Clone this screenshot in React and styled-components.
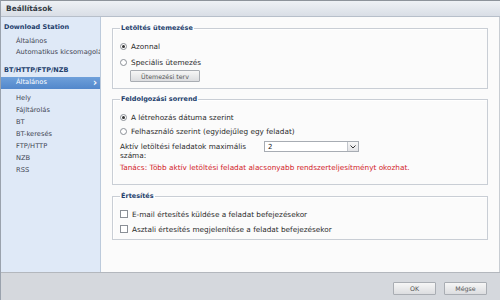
import React from "react"
import styled, { createGlobalStyle } from "styled-components"

const Global = createGlobalStyle`
  html, body { margin: 0; padding: 0; background: #fff; }
  body { font-family: "DejaVu Sans", Verdana, sans-serif; }
`;

const Window = styled.div`
  width: 500px;
  height: 300px;
  display: flex;
  flex-direction: column;
  overflow: hidden;
  box-sizing: border-box;
  border-top: 1px solid #8d939b;
  border-left: 1px solid #9aa2ad;
`;

const TitleBar = styled.div`
  height: 15px;
  flex: none;
  display: flex;
  align-items: center;
  padding-left: 5px;
  background: linear-gradient(#eef1f5, #d9dee6);
  border-bottom: 1px solid #b7bfca;
  font-size: 7.4px;
  font-weight: bold;
  color: #333a44;
`;

const Body = styled.div`
  flex: 1;
  display: flex;
  min-height: 0;
`;

const Sidebar = styled.div`
  width: 100px;
  flex: none;
  background: #dfe9f7;
  border-right: 1px solid #bccadb;
  padding-top: 4px;
  box-sizing: border-box;
`;

const GroupTitle = styled.div`
  height: 13px;
  line-height: 13px;
  padding-left: 3px;
  font-size: 6.5px;
  font-weight: bold;
  color: #23406c;
  margin-top: ${p => p.$gap || 0}px;
  margin-bottom: ${p => p.$mb || 0}px;
`;

const NavItem = styled.div`
  height: ${p => p.$h || 12}px;
  line-height: ${p => p.$h || 12}px;
  padding-left: 15px;
  padding-right: 3px;
  font-size: 6.7px;
  color: ${p => (p.$active ? "#fff" : "#3f4754")};
  background: ${p => (p.$active ? "linear-gradient(#6fa0da, #5287cb)" : "transparent")};
  white-space: nowrap;
  overflow: hidden;
  display: flex;
  align-items: center;
  justify-content: space-between;
  margin-bottom: ${p => (p.$active ? 3 : 0)}px;
`;

const Chevron = styled.span`
  font-weight: bold;
  font-size: 10px;
  line-height: 10px;
`;

const Content = styled.div`
  flex: 1;
  background: #fbfbfb;
  padding: 7px 11px 0 11px;
  border-right: 1px solid #c8cdd3;
  box-sizing: border-box;
`;

const Group = styled.fieldset`
  margin: 0 0 ${p => p.$mb}px 0;
  padding: 0 7px;
  border: 1px solid #c9ced5;
  box-shadow: inset 1px 1px 0 #fff;
  height: ${p => p.$h}px;
  box-sizing: border-box;
`;

const Legend = styled.legend`
  padding: 0 1px;
  margin-left: 0;
  font-size: 6.5px;
  font-weight: bold;
  color: #23406c;
`;

const Row = styled.div`
  display: flex;
  align-items: center;
  height: ${p => p.$h || 15}px;
  margin-top: ${p => p.$mt || 0}px;
  font-size: 7.3px;
  color: #2b2b2b;
  padding-left: ${p => p.$indent || 0}px;
  white-space: nowrap;
`;

const Radio = styled.span`
  width: 5px;
  height: 5px;
  flex: none;
  border-radius: 50%;
  border: 1px solid #8a8f96;
  background: #fff;
  margin-right: 4px;
  display: flex;
  align-items: center;
  justify-content: center;
  &::after {
    content: "";
    width: 3px;
    height: 3px;
    border-radius: 50%;
    background: ${p => (p.$on ? "#333" : "transparent")};
  }
`;

const Check = styled.span`
  width: 6px;
  height: 6px;
  flex: none;
  border: 1px solid #8a8f96;
  background: #fff;
  margin-right: 4px;
`;

const Button = styled.div`
  width: ${p => p.$w}px;
  height: ${p => p.$hh || 12}px;
  box-sizing: border-box;
  border: 1px solid #a9adb3;
  border-radius: 1px;
  background: linear-gradient(#f6f6f6, #dcdde0);
  display: flex;
  align-items: center;
  justify-content: center;
  font-size: 6.3px;
  color: #555;
`;

const FieldRow = styled.div`
  display: flex;
  align-items: flex-start;
  margin-top: 3px;
  height: 19px;
`;

const FieldLabel = styled.div`
  width: 144px;
  padding-top: 1px;
  font-size: 7.3px;
  line-height: 9px;
  color: #2b2b2b;
`;

const Select = styled.div`
  width: 95px;
  height: 11px;
  box-sizing: border-box;
  border: 1px solid #a7acb3;
  background: #fff;
  display: flex;
  align-items: center;
  font-size: 7px;
  color: #222;
  padding-left: 3px;
`;

const SelectText = styled.span`
  flex: 1;
`;

const Arrow = styled.span`
  width: 10px;
  height: 9px;
  border-left: 1px solid #c2c6cc;
  background: linear-gradient(#f7f7f7, #e2e3e6);
  display: flex;
  align-items: center;
  justify-content: center;
`;

const Hint = styled.div`
  margin-top: 2px;
  font-size: 7.3px;
  color: #d2232a;
  height: 12px;
  line-height: 12px;
  white-space: nowrap;
`;

const Footer = styled.div`
  height: 28px;
  flex: none;
  background: #d5d8dd;
  border-top: 1px solid #b3b7bd;
  display: flex;
  justify-content: flex-end;
  align-items: center;
  gap: 8px;
  padding: 4px 13px 0 0;
  box-sizing: border-box;
`;

const App = () => {
  const items = ["Hely", "Fájltárolás", "BT", "BT-keresés", "FTP/HTTP", "NZB", "RSS"];
  return (
    <Window>
      <Global />
      <TitleBar>Beállítások</TitleBar>
      <Body>
        <Sidebar>
          <GroupTitle $mb={2}>Download Station</GroupTitle>
          <NavItem $h={11}>Általános</NavItem>
          <NavItem $h={11}>Automatikus kicsomagolás</NavItem>
          <GroupTitle $gap={6}>BT/HTTP/FTP/NZB</GroupTitle>
          <NavItem $active $h={11.5}>
            Általános <Chevron>›</Chevron>
          </NavItem>
          {items.map(i => (
            <NavItem key={i}>{i}</NavItem>
          ))}
        </Sidebar>
        <Content>
          <Group $h={65} $mb={6}>
            <Legend>Letöltés ütemezése</Legend>
            <Row $h={16} $mt={6}>
              <Radio $on />
              Azonnal
            </Row>
            <Row $h={16}>
              <Radio />
              Speciális ütemezés
            </Row>
            <Row $h={12} $indent={10}>
              <Button $w={70}>Ütemezési terv</Button>
            </Row>
          </Group>

          <Group $h={90} $mb={7}>
            <Legend>Feldolgozási sorrend</Legend>
            <Row $h={14} $mt={7}>
              <Radio $on />
              A létrehozás dátuma szerint
            </Row>
            <Row $h={14}>
              <Radio />
              Felhasználó szerint (egyidejűleg egy feladat)
            </Row>
            <FieldRow>
              <FieldLabel>
                Aktív letöltési feladatok maximális
                <br />
                száma:
              </FieldLabel>
              <Select>
                <SelectText>2</SelectText>
                <Arrow>
                  <svg width="6" height="4" viewBox="0 0 6 4">
                    <path d="M0.5 0.5 L3 3 L5.5 0.5" fill="none" stroke="#333" strokeWidth="1" />
                  </svg>
                </Arrow>
              </Select>
            </FieldRow>
            <Hint>Tanács: Több aktív letöltési feladat alacsonyabb rendszerteljesítményt okozhat.</Hint>
          </Group>

          <Group $h={48} $mb={0}>
            <Legend>Értesítés</Legend>
            <Row $h={14} $mt={7}>
              <Check />
              E-mail értesítés küldése a feladat befejezésekor
            </Row>
            <Row $h={14} $mt={1}>
              <Check />
              Asztali értesítés megjelenítése a feladat befejezésekor
            </Row>
          </Group>
        </Content>
      </Body>
      <Footer>
        <Button $w={43} $hh={13}>OK</Button>
        <Button $w={43} $hh={13}>Mégse</Button>
      </Footer>
    </Window>
  )
}

export default App
